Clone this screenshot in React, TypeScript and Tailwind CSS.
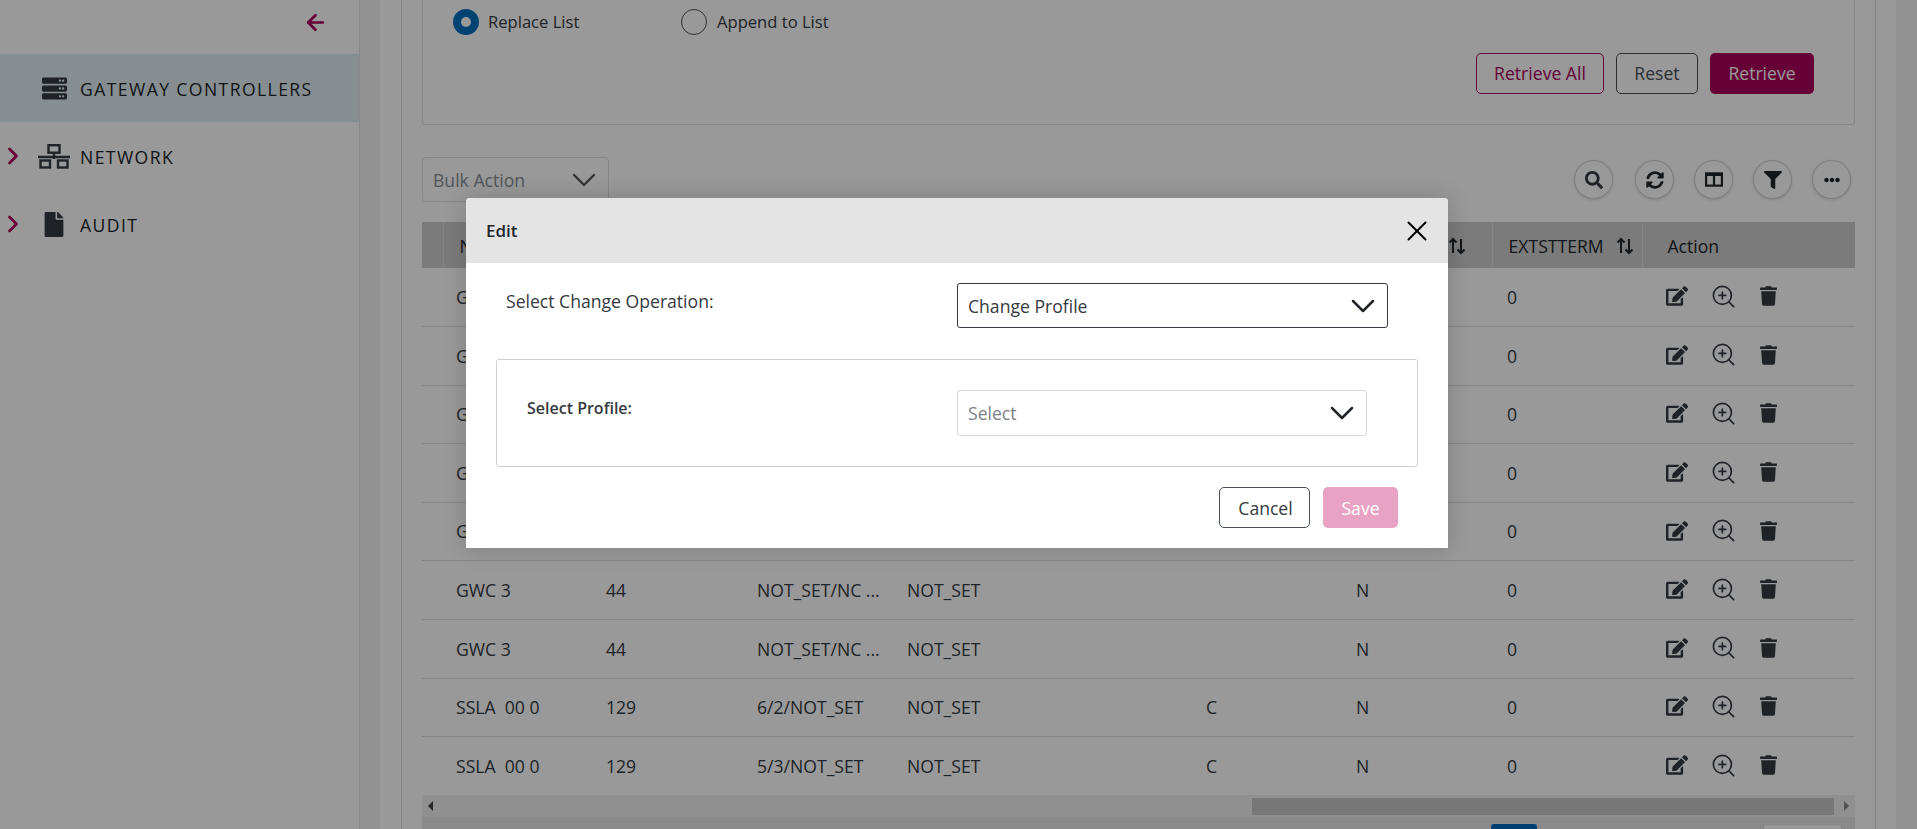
import React from 'react';
import { ArrowLeft, ChevronDown, ChevronRight, X, ZoomIn } from 'lucide-react';
import { FaEdit, FaEllipsisH, FaFile, FaFilter, FaSearch, FaServer, FaSyncAlt, FaTrash } from 'react-icons/fa';

const rows = [
  { name: 'GWC 3', id: '44', a: 'NOT_SET/NC ...', b: 'NOT_SET', c: '', d: 'N' },
  { name: 'GWC 3', id: '44', a: 'NOT_SET/NC ...', b: 'NOT_SET', c: '', d: 'N' },
  { name: 'GWC 3', id: '44', a: 'NOT_SET/NC ...', b: 'NOT_SET', c: '', d: 'N' },
  { name: 'GWC 3', id: '44', a: 'NOT_SET/NC ...', b: 'NOT_SET', c: '', d: 'N' },
  { name: 'GWC 3', id: '44', a: 'NOT_SET/NC ...', b: 'NOT_SET', c: '', d: 'N' },
  { name: 'GWC 3', id: '44', a: 'NOT_SET/NC ...', b: 'NOT_SET', c: '', d: 'N' },
  { name: 'GWC 3', id: '44', a: 'NOT_SET/NC ...', b: 'NOT_SET', c: '', d: 'N' },
  { name: 'SSLA  00 0', id: '129', a: '6/2/NOT_SET', b: 'NOT_SET', c: 'C', d: 'N' },
  { name: 'SSLA  00 0', id: '129', a: '5/3/NOT_SET', b: 'NOT_SET', c: 'C', d: 'N' },
];

const SortIcon = () => (
  <svg viewBox="0 0 18 18" className="w-[18px] h-[18px] text-[#212529]" fill="none" stroke="currentColor" strokeWidth="2">
    <path d="M5 16V2M1.5 5.5 5 2l3.5 3.5" />
    <path d="M13 2v14M9.5 12.5 13 16l3.5-3.5" />
  </svg>
);

const NetworkIcon = () => (
  <svg viewBox="0 0 32 25" className="w-[32px] h-[25px] text-[#343a40]" fill="none" stroke="currentColor" strokeWidth="2.4">
    <rect x="10.5" y="1.2" width="11" height="7.5" />
    <path d="M16 9v6M0 13h32" />
    <rect x="2.5" y="16.5" width="9.5" height="7" />
    <rect x="20" y="16.5" width="9.5" height="7" />
  </svg>
);

const ColumnsIcon = () => (
  <svg viewBox="0 0 20 16" className="w-[18px] h-[15px] text-[#212529]" fill="none" stroke="currentColor" strokeWidth="2.4">
    <rect x="1.2" y="1.2" width="17.6" height="13.6" />
    <path d="M10 2v13M1 3h18" />
  </svg>
);

const CircleButton = ({ children }: { children: React.ReactNode }) => (
  <button className="w-[39px] h-[39px] rounded-full border border-[#cfcfcf] bg-white shadow-[0_1px_3px_rgba(0,0,0,0.15)] flex items-center justify-center text-[#343a40]">
    {children}
  </button>
);

const SideItem = ({ label, icon, expandable }: { label: string; icon: React.ReactNode; expandable?: boolean }) => (
  <div className="h-[68px] flex items-center text-[#212529]">
    <div className="w-[36px] -ml-px mr-px">
      {expandable && <ChevronRight className="w-[28px] h-[28px] text-[#aa005a]" strokeWidth={2.4} />}
    </div>
    <div className="w-[44px] flex justify-center pr-[8px]">{icon}</div>
    <span className="text-[17.6px] tracking-[1.4px] pt-[2px]">{label}</span>
  </div>
);

export default function App() {
  return (
    <div className="relative w-full h-[829px] overflow-hidden bg-white font-['Open_Sans',sans-serif] text-[#212529]">
      <div className="flex h-full">
        {/* Sidebar */}
        <aside className="w-[360px] shrink-0 border-r border-[#e4e4e4]">
          <div className="h-[54px] flex items-center justify-end pr-[31px] pb-[10px]">
            <ArrowLeft className="w-[25px] h-[25px] text-[#aa005a]" strokeWidth={2.6} />
          </div>
          <div className="bg-[#dfedf2]">
            <SideItem label="GATEWAY CONTROLLERS" icon={<FaServer className="w-[25px] h-[25px] text-[#343a40]" />} />
          </div>
          <SideItem label="NETWORK" expandable icon={<NetworkIcon />} />
          <SideItem label="AUDIT" expandable icon={<FaFile className="w-[20px] h-[25px] text-[#343a40]" />} />
        </aside>
        <div className="w-[20px] shrink-0 bg-[#f3f3f3]" />

        {/* Content */}
        <div className="flex-1 min-w-0 pl-[21px] pr-[21px]">
          <div className="w-[1475px] h-full border-x border-[#dcdcdc] px-[20px]">
            <div className="h-[125px] border-x border-b border-[#e0e0e0] rounded-b-[3px]">
              <div className="h-[44px] flex items-center pl-[30px] text-[16.6px] font-medium text-[#343a40]">
                <span className="w-[26px] h-[26px] rounded-full bg-[#0070c0] flex items-center justify-center">
                  <span className="w-[10px] h-[10px] rounded-full bg-white" />
                </span>
                <span className="ml-[9px] w-[193px]">Replace List</span>
                <span className="w-[26px] h-[26px] rounded-full border border-[#555] bg-white" />
                <span className="ml-[10px]">Append to List</span>
              </div>
              <div className="mt-[9px] flex justify-end gap-[12px] pr-[40px] text-[17.6px]">
                <button className="w-[128px] h-[41px] rounded-[5px] border border-[#aa005a] text-[#aa005a]">Retrieve All</button>
                <button className="w-[82px] h-[41px] rounded-[5px] border border-[#495057] text-[#495057]">Reset</button>
                <button className="w-[104px] h-[41px] rounded-[5px] bg-[#aa005a] text-white">Retrieve</button>
              </div>
            </div>

            <div className="mt-[32px] flex items-center justify-between pr-[4px]">
              <div className="w-[187px] h-[45px] rounded-[4px] border border-[#e0e0e0] flex items-center justify-between pl-[10px] pr-[4px] text-[17.6px] text-[#8a8f94]">
                <span className="pt-[2px]">Bulk Action</span>
                <ChevronDown className="w-[40px] h-[40px] text-[#555]" strokeWidth={1.4} />
              </div>
              <div className="flex gap-[20px]">
                <div className="mr-[2px]">
                  <CircleButton><FaSearch className="w-[18px] h-[18px]" /></CircleButton>
                </div>
                <CircleButton><FaSyncAlt className="w-[18px] h-[18px] text-[#212529]" /></CircleButton>
                <CircleButton><ColumnsIcon /></CircleButton>
                <CircleButton><FaFilter className="w-[18px] h-[18px] text-[#212529]" /></CircleButton>
                <CircleButton><FaEllipsisH className="w-[16px] h-[16px] text-[#212529]" /></CircleButton>
              </div>
            </div>

            <table className="mt-[20px] w-[1433px] table-fixed border-collapse text-[17.6px]">
              <colgroup>
                <col className="w-[21px]" />
                <col className="w-[150px]" />
                <col className="w-[150px]" />
                <col className="w-[150px]" />
                <col className="w-[150px]" />
                <col className="w-[150px]" />
                <col className="w-[150px]" />
                <col className="w-[149px]" />
                <col className="w-[150px]" />
                <col className="w-[213px]" />
              </colgroup>
              <thead>
                <tr className="h-[46px] bg-[#cdcdcd] text-left font-medium [&>th]:font-medium [&>th]:pt-[2px] [&>th]:border-r [&>th]:border-[#dedede] [&>th:last-child]:border-r-0">
                  <th />
                  <th className="pl-[16px]">NAME</th>
                  <th className="pl-[13px]">ID</th>
                  <th className="pl-[13px]">ADDRESS</th>
                  <th className="pl-[13px]">PROFILE</th>
                  <th className="pl-[13px]">TYPE</th>
                  <th className="pl-[13px]">CLASS</th>
                  <th className="pl-[13px]">
                    <div className="flex items-center justify-end pr-[26px]"><SortIcon /></div>
                  </th>
                  <th className="pl-[16px]">
                    <div className="flex items-center gap-[12px]">EXTSTTERM <SortIcon /></div>
                  </th>
                  <th className="pl-[25px]">Action</th>
                </tr>
              </thead>
              <tbody className="text-[#343a40]">
                {rows.map((row, index) => (
                  <tr key={index} className="h-[58.6px] border-b border-[#dedede] last:border-b-0">
                    <td />
                    <td className="pl-[13px] whitespace-pre">{row.name}</td>
                    <td className="pl-[13px]">{row.id}</td>
                    <td className="pl-[14px] whitespace-nowrap overflow-hidden">{row.a}</td>
                    <td className="pl-[14px]">{row.b}</td>
                    <td />
                    <td className="pl-[13px]">{row.c}</td>
                    <td className="pl-[13px]">{row.d}</td>
                    <td className="pl-[15px]">0</td>
                    <td className="pl-[24px]">
                      <div className="flex items-center text-[#343a40] -mt-[2px]">
                        <FaEdit className="w-[22px] h-[22px]" />
                        <ZoomIn className="ml-[22px] w-[27px] h-[27px]" strokeWidth={1.5} />
                        <FaTrash className="ml-[23px] w-[17px] h-[20px]" />
                      </div>
                    </td>
                  </tr>
                ))}
              </tbody>
            </table>

            {/* Horizontal scrollbar */}
            <div className="h-[22px] w-[1433px] bg-[#f0f0f0] flex items-center justify-between px-[6px] text-[#555]">
              <span className="w-0 h-0 border-y-[5px] border-y-transparent border-r-[5px] border-r-[#444]" />
              <div className="ml-[819px] mr-[10px] flex-1 h-[17px] bg-[#c8c8c8]" />
              <span className="w-0 h-0 border-y-[5px] border-y-transparent border-l-[5px] border-l-[#8a8a8a]" />
            </div>
            <div className="h-[20px] w-[1433px] bg-[#e6e6e6] pt-[7px] flex">
              <div className="ml-[1069px] w-[46px] h-[30px] rounded-[3px] bg-[#006bbb]" />
              <div className="ml-[226px] w-[79px] h-[30px] rounded-[3px] bg-white border border-[#dcdcdc]" />
            </div>
          </div>
        </div>
        <div className="w-[21px] shrink-0 bg-[#f3f3f3]" />
      </div>

      {/* Backdrop */}
      <div className="absolute inset-0 bg-black/40" />

      {/* Edit dialog */}
      <div className="absolute left-[466px] top-[198px] w-[982px] h-[350px] bg-white rounded-t-[4px] shadow-[0_0_24px_rgba(0,0,0,0.18)]">
        <div className="h-[65px] bg-[#e4e4e4] rounded-t-[4px] flex items-center justify-between pl-[20px] pr-[14px]">
          <span className="text-[17px] font-semibold text-[#212529]">Edit</span>
          <X className="w-[34px] h-[34px] text-black" strokeWidth={1.4} />
        </div>
        <div className="pt-[20px] pl-[40px] flex">
          <div className="w-[451px] pt-[5px] text-[17.6px] text-[#343a40]">Select Change Operation:</div>
          <div className="w-[431px] h-[45px] rounded-[3px] border border-[#343a40] flex items-center justify-between pl-[10px] pr-[4px] text-[17.6px] text-[#343a40]">
            <span className="pt-[1px]">Change Profile</span>
            <ChevronDown className="w-[40px] h-[40px] text-[#212529]" strokeWidth={1.5} />
          </div>
        </div>
        <div className="mt-[31px] ml-[30px] w-[922px] h-[108px] rounded-[3px] border border-[#cfcfcf] pt-[30px] pl-[30px] flex">
          <div className="w-[430px] pt-[6px] text-[16px] font-semibold text-[#343a40]">Select Profile:</div>
          <div className="w-[410px] h-[46px] rounded-[3px] border border-[#d8d8d8] flex items-center justify-between pl-[10px] pr-[4px] text-[17.6px] text-[#7b8187]">
            <span>Select</span>
            <ChevronDown className="w-[40px] h-[40px] text-[#212529]" strokeWidth={1.5} />
          </div>
        </div>
        <div className="mt-[20px] pr-[50px] flex justify-end gap-[13px] text-[17.6px]">
          <button className="w-[91px] h-[41px] pt-[2px] pl-[2px] rounded-[5px] border border-[#495057] text-[#343a40]">Cancel</button>
          <button className="w-[75px] h-[41px] pt-[2px] rounded-[5px] bg-[#e8a3c4] text-white">Save</button>
        </div>
      </div>
    </div>
  );
}
